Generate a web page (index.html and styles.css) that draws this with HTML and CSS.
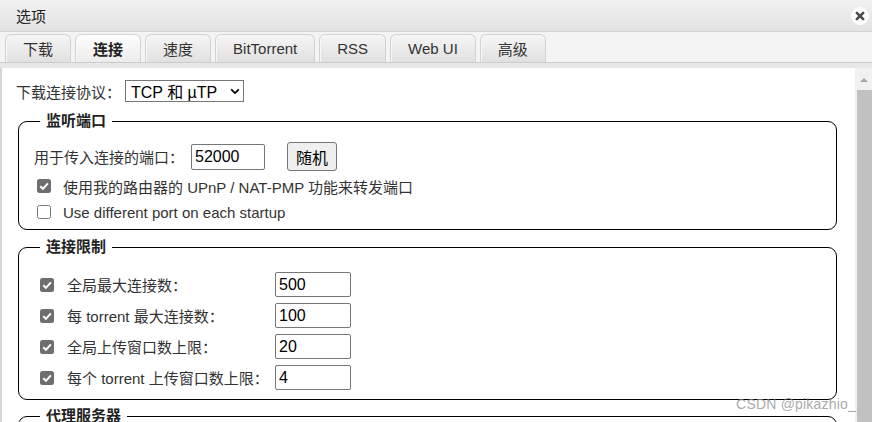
FILE: index.html
```html
<!DOCTYPE html>
<html lang="zh">
<head>
<meta charset="utf-8">
<title>选项</title>
<link rel="stylesheet" href="styles.css">
</head>
<body>
<div class="window">
  <div class="titlebar">
    <span class="title">选项</span>
    <span class="close">
      <svg width="18" height="18" viewBox="0 0 18 18">
        <circle cx="9" cy="9" r="9" fill="#ffffff"/>
        <path d="M5.8 5.8 L12.2 12.2 M12.2 5.8 L5.8 12.2" stroke="#4d4d4d" stroke-width="2.6" stroke-linecap="round"/>
      </svg>
    </span>
  </div>
  <div class="tabbar">
    <div class="tab">下载</div>
    <div class="tab active">连接</div>
    <div class="tab">速度</div>
    <div class="tab">BitTorrent</div>
    <div class="tab">RSS</div>
    <div class="tab">Web UI</div>
    <div class="tab">高级</div>
  </div>
  <div class="tabline"></div>
  <div class="body">
    <div class="content">
      <div class="proto-row">
        <span class="label">下载连接协议：</span>
        <div class="select">
          <span>TCP 和 µTP</span>
          <svg width="10" height="7" viewBox="0 0 10 7"><path d="M1.2 1.3 L5 5.1 L8.8 1.3" fill="none" stroke="#000" stroke-width="1.8"/></svg>
        </div>
      </div>

      <fieldset class="group g1">
        <legend>监听端口</legend>
        <div class="port-row">
          <span class="label">用于传入连接的端口：</span>
          <input class="num port" type="text" value="52000">
          <button class="btn" type="button">随机</button>
        </div>
        <div class="check-row">
          <span class="cb checked"><svg width="14" height="14" viewBox="0 0 14 14"><rect x="0" y="0" width="14" height="14" rx="2.5" fill="#6e6e6e"/><path d="M3.3 7.2 L5.9 9.8 L10.9 4.3" fill="none" stroke="#fff" stroke-width="2"/></svg></span>
          <span class="label">使用我的路由器的 UPnP / NAT-PMP 功能来转发端口</span>
        </div>
        <div class="check-row">
          <span class="cb"></span>
          <span class="label">Use different port on each startup</span>
        </div>
      </fieldset>

      <fieldset class="group g2">
        <legend>连接限制</legend>
        <div class="limit-row">
          <span class="cb checked"><svg width="14" height="14" viewBox="0 0 14 14"><rect x="0" y="0" width="14" height="14" rx="2.5" fill="#6e6e6e"/><path d="M3.3 7.2 L5.9 9.8 L10.9 4.3" fill="none" stroke="#fff" stroke-width="2"/></svg></span>
          <span class="label">全局最大连接数：</span>
          <input class="num lim" type="text" value="500">
        </div>
        <div class="limit-row">
          <span class="cb checked"><svg width="14" height="14" viewBox="0 0 14 14"><rect x="0" y="0" width="14" height="14" rx="2.5" fill="#6e6e6e"/><path d="M3.3 7.2 L5.9 9.8 L10.9 4.3" fill="none" stroke="#fff" stroke-width="2"/></svg></span>
          <span class="label">每 torrent 最大连接数：</span>
          <input class="num lim" type="text" value="100">
        </div>
        <div class="limit-row">
          <span class="cb checked"><svg width="14" height="14" viewBox="0 0 14 14"><rect x="0" y="0" width="14" height="14" rx="2.5" fill="#6e6e6e"/><path d="M3.3 7.2 L5.9 9.8 L10.9 4.3" fill="none" stroke="#fff" stroke-width="2"/></svg></span>
          <span class="label">全局上传窗口数上限：</span>
          <input class="num lim" type="text" value="20">
        </div>
        <div class="limit-row">
          <span class="cb checked"><svg width="14" height="14" viewBox="0 0 14 14"><rect x="0" y="0" width="14" height="14" rx="2.5" fill="#6e6e6e"/><path d="M3.3 7.2 L5.9 9.8 L10.9 4.3" fill="none" stroke="#fff" stroke-width="2"/></svg></span>
          <span class="label">每个 torrent 上传窗口数上限：</span>
          <input class="num lim" type="text" value="4">
        </div>
      </fieldset>

      <fieldset class="group g3">
        <legend>代理服务器</legend>
        <div class="port-row">
          <span class="label">类型：</span>
        </div>
      </fieldset>
    </div>
    <div class="scrollbar">
      <div class="arrow"></div>
      <div class="thumb"></div>
    </div>
  </div>
  <div class="watermark">CSDN @pikazhio_</div>
</div>
</body>
</html>
```

FILE: styles.css
```css
* { box-sizing: border-box; }

body {
  margin: 0;
  font-family: "Liberation Sans", Arial, "Noto Sans CJK SC", sans-serif;
  font-size: 15px;
  color: #333;
  background: #fff;
}

.window {
  width: 872px;
  height: 422px;
  overflow: hidden;
  position: relative;
  display: flex;
  flex-direction: column;
}

.titlebar {
  height: 32px;
  flex: none;
  display: flex;
  align-items: center;
  justify-content: space-between;
  padding: 0 3px 0 16px;
  background: linear-gradient(#f1f1f1, #e3e3e3);
  border-bottom: 1px solid #d2d2d2;
}

.title {
  font-size: 15px;
  color: #222;
}

.close {
  width: 18px;
  height: 18px;
  display: flex;
}

.tabbar {
  height: 31px;
  flex: none;
  display: flex;
  align-items: flex-end;
  gap: 4px;
  padding-left: 5px;
  background: #f4f4f4;
  border-bottom: 1px solid #cbcbcb;
}

.tab {
  height: 28px;
  padding: 0 17px;
  display: flex;
  align-items: center;
  border: 1px solid #d2d2d2;
  border-bottom: none;
  border-radius: 6px 6px 0 0;
  background: linear-gradient(#f6f6f6, #e0e0e0);
  color: #333;
  font-size: 15px;
  box-shadow: inset 1px 0 0 #f9f9f9;
}

.tab.active {
  background: linear-gradient(#fdfdfd, #ececec);
  font-weight: bold;
  color: #222;
}

.tabline {
  height: 5px;
  flex: none;
  background: #e8e8e8;
}

.body {
  flex: 1;
  display: flex;
  min-height: 0;
}

.content {
  flex: 1;
  border-left: 2px solid #d6d6d6;
  padding: 12px 18px 0 14px;
  overflow: hidden;
}

.label {
  color: #333;
  white-space: nowrap;
}

.proto-row {
  display: flex;
  align-items: center;
  height: 22px;
}

.select {
  margin-left: 4px;
  width: 119px;
  height: 22px;
  border: 1px solid #767676;
  display: flex;
  align-items: center;
  justify-content: space-between;
  padding: 0 3px 0 5px;
  font-size: 16px;
  color: #000;
}

.group {
  margin: 10px 0 0 2px;
  border: 1px solid #000;
  border-radius: 9px;
  padding: 12px 14px 4px 15px;
  min-width: 0;
}

.group legend {
  font-weight: bold;
  font-size: 15px;
  line-height: 18px;
  color: #222;
  padding: 0 6px;
  margin-left: 6px;
}

.g2 {
  margin-top: 8px;
  padding-top: 16px;
  padding-bottom: 9px;
}

.g3 {
  margin-top: 7px;
}

.port-row {
  display: flex;
  align-items: center;
  height: 29px;
}

.port-row + .check-row {
  margin-top: 2px;
}

.num {
  height: 25px;
  border: 1px solid #767676;
  border-radius: 2px;
  font-family: "Liberation Sans", Arial, sans-serif;
  font-size: 16px;
  color: #000;
  padding: 1px 3px;
  background: #fff;
}

.port {
  width: 74px;
  height: 26px;
  margin-left: 7px;
}

.btn {
  margin-left: 22px;
  width: 50px;
  height: 29px;
  font-family: "Liberation Sans", Arial, "Noto Sans CJK SC", sans-serif;
  font-size: 16px;
  color: #000;
  background: #efefef;
  border: 1px solid #767676;
  border-radius: 3px;
  padding: 0;
}

.check-row {
  display: flex;
  align-items: center;
  height: 26px;
}

.cb {
  width: 14px;
  height: 14px;
  flex: none;
  display: flex;
  border: 1px solid #767676;
  border-radius: 2.5px;
  background: #fff;
}

.cb.checked {
  border: none;
}

.check-row .cb {
  margin-left: 3px;
}

.check-row .label {
  margin-left: 12px;
}

.limit-row {
  display: flex;
  align-items: center;
  height: 25px;
}

.limit-row + .limit-row {
  margin-top: 6px;
}

.limit-row .cb {
  margin-left: 6px;
}

.limit-row .label {
  margin-left: 13px;
  width: 208px;
}

.lim {
  width: 76px;
}

.scrollbar {
  width: 17px;
  flex: none;
  background: #f1f1f1;
  display: flex;
  flex-direction: column;
  align-items: flex-end;
}

.arrow {
  margin-top: 10px;
  margin-right: 4px;
  width: 0;
  height: 0;
  border-left: 4px solid transparent;
  border-right: 4px solid transparent;
  border-bottom: 4px solid #a3a3a3;
}

.thumb {
  margin-top: 8px;
  width: 15px;
  flex: 1;
  background: #c1c1c1;
}

.watermark {
  position: absolute;
  right: 16px;
  top: 396px;
  font-size: 14px;
  color: rgba(140, 140, 140, 0.75);
  letter-spacing: 0.2px;
}
```
